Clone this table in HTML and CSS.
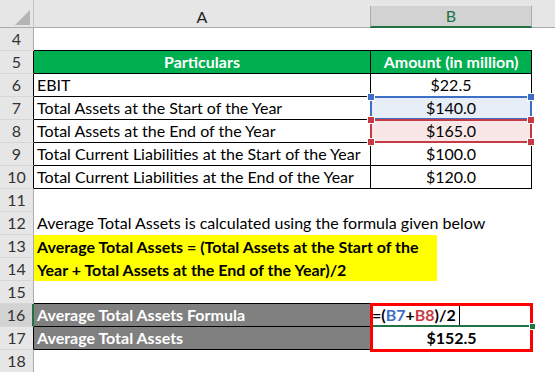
FILE: index.html
```html
<!DOCTYPE html>
<html>
<head>
<meta charset="utf-8">
<link rel="stylesheet" href="styles.css">
</head>
<body>
<div class="sheet">
  <!-- header row -->
  <div class="corner"><svg width="15" height="15" viewBox="0 0 15 15"><polygon points="15,0 15,15 0,15" fill="#b4b4b4"/></svg></div>
  <div class="ch"><div class="chl">A</div></div>
  <div class="ch"><div class="chl sel">B</div></div>
  <div class="ch"><div class="chl last"></div></div>

  <!-- 4 -->
  <div class="rh">4</div><div class="c bb"></div><div class="c bb"></div><div class="c"></div>
  <!-- 5 -->
  <div class="rh tb">5</div><div class="c t g ctr">Particulars</div><div class="c t g ctr">Amount (in million)</div><div class="c"></div>
  <!-- 6 -->
  <div class="rh tb">6</div><div class="c t">EBIT</div><div class="c t ctr">$22.5</div><div class="c"></div>
  <!-- 7 -->
  <div class="rh tb">7</div><div class="c t">Total Assets at the Start of the Year</div>
  <div class="c t ctr pos fillb">$140.0<div class="rng blue"><i class="h tl"></i><i class="h tr"></i></div></div><div class="c"></div>
  <!-- 8 -->
  <div class="rh tb">8</div><div class="c t">Total Assets at the End of the Year</div>
  <div class="c t ctr pos fillr">$165.0<div class="rng red"><i class="h tl"></i><i class="h tr"></i><i class="h bl"></i><i class="h br"></i></div></div><div class="c"></div>
  <!-- 9 -->
  <div class="rh tb">9</div><div class="c t">Total Current Liabilities at the Start of the Year</div><div class="c t ctr">$100.0</div><div class="c"></div>
  <!-- 10 -->
  <div class="rh tb">10</div><div class="c t">Total Current Liabilities at the End of the Year</div><div class="c t ctr">$120.0</div><div class="c"></div>
  <!-- 11 -->
  <div class="rh">11</div><div class="c"></div><div class="c"></div><div class="c"></div>
  <!-- 12 -->
  <div class="rh">12</div><div class="c">Average Total Assets is calculated using the formula given below</div><div class="c"></div><div class="c"></div>
  <!-- 13-14 -->
  <div class="rh">13</div>
  <div class="note">Average Total Assets = (Total Assets at the Start of the<br>Year + Total Assets at the End of the Year)/2</div>
  <div class="c"></div>
  <div class="rh">14</div><div class="c"></div>
  <!-- 15 -->
  <div class="rh">15</div><div class="c bb"></div><div class="c"></div><div class="c"></div>
  <!-- 16 -->
  <div class="rh tb act">16</div><div class="c t gray">Average Total Assets Formula</div>
  <div class="c pos edit"><span class="fx">=(<span class="rb">B7</span>+<span class="rr">B8</span>)/2</span><span class="caret"></span><div class="box"></div><i class="gh"></i></div><div class="c"></div>
  <!-- 17 -->
  <div class="rh tb">17</div><div class="c t gray">Average Total Assets</div><div class="c ctr bold">$152.5</div><div class="c"></div>
  <!-- 18 -->
  <div class="rh">18</div><div class="c"></div><div class="c"></div><div class="c"></div>
</div>
</body>
</html>
```

FILE: styles.css
```css
html, body {
  margin: 0;
  padding: 0;
  background: #fff;
}
.sheet {
  display: grid;
  grid-template-columns: 34px 337px 161px 23px;
  grid-template-rows: 28px repeat(15, 23px);
  width: 555px;
  height: 372px;
  overflow: hidden;
  font-family: Lato, "Liberation Sans", sans-serif;
  font-size: 16px;
  color: #000;
}
.sheet > * { box-sizing: border-box; }

/* column header */
.corner {
  background: #e6e6e6;
  border-right: 1px solid #c4c4c4;
  border-bottom: 1px solid #ababab;
  display: flex;
  justify-content: flex-end;
  align-items: flex-end;
  padding: 0 3px 2px 0;
}
.ch {
  background: #e6e6e6;
  border-bottom: 1px solid #ababab;
  display: flex;
  padding-top: 6px;
}
.chl {
  flex: 1;
  text-align: center;
  line-height: 21px;
  color: #222;
  border-right: 1px solid #c8c8c8;
}
.chl.sel {
  background: #d2d2d2;
  color: #217346;
  border-left: 1px solid #ababab;
  border-right: 1px solid #ababab;
  border-bottom: 2px solid #217346;
  margin-left: -1px;
  margin-bottom: -1px;
  line-height: 20px;
}
.chl.last { border-right: none; }

/* row header */
.rh {
  background: #e6e6e6;
  border-right: 1px solid #ababab;
  border-bottom: 1px solid #d6d6d6;
  text-align: center;
  line-height: 22px;
  color: #333;
}
.rh.tb { border-right-color: #000; }
.rh.act {
  background: #d2d2d2;
  border-right: 2px solid #217346;
  color: #333;
}

/* cells */
.c {
  line-height: 22px;
  padding: 0 3px;
  white-space: nowrap;
}
.t {
  border-bottom: 1px solid #000;
  border-right: 1px solid #000;
}
.bb { border-bottom: 1px solid #000; }
.ctr { text-align: center; }
.bold { font-weight: bold; }
.g {
  background: #00b050;
  color: #fff;
  font-weight: bold;
}
.gray {
  background: #808080;
  color: #fff;
  font-weight: bold;
}
.pos { position: relative; }
.fillb { background: #e7eef8; }
.fillr { background: #f9e7e7; }

.rng {
  position: absolute;
  top: -1px;
  left: -1px;
  right: -1px;
  bottom: -1px;
  border: 2px solid;
}
.blue { color: #3d6fc6; border-color: #3d6fc6; }
.red { color: #c43b45; border-color: #c43b45; z-index: 1; }
.h {
  position: absolute;
  width: 6px;
  height: 6px;
  background: currentColor;
  outline: 1px solid #fff;
}
.h.tl { left: -4px; top: -4px; }
.h.tr { right: -4px; top: -4px; }
.h.bl { left: -4px; bottom: -4px; }
.h.br { right: -4px; bottom: -4px; }

/* yellow note */
.note {
  grid-column: 2 / 4;
  grid-row: span 2;
  width: 403px;
  background: #ffff00;
  font-weight: bold;
  line-height: 23px;
  padding: 0 3px;
  white-space: nowrap;
}

/* editing cell */
.edit {
  border-bottom: 2px solid #217346;
  padding-left: 1px;
  font-weight: bold;
}
.rb { color: #3d6fc6; }
.rr { color: #c43b45; }
.caret {
  display: inline-block;
  width: 1px;
  height: 20px;
  background: #000;
  vertical-align: top;
  margin-top: 1px;
  margin-left: 3px;
}
.box {
  position: absolute;
  top: -1px;
  left: -1px;
  width: 163px;
  height: 49px;
  border: 3px solid #ff0000;
  box-sizing: border-box;
  z-index: 2;
}
.gh {
  position: absolute;
  right: -3px;
  bottom: -4px;
  width: 5px;
  height: 5px;
  background: #217346;
  outline: 1px solid #fff;
  z-index: 3;
}
```
